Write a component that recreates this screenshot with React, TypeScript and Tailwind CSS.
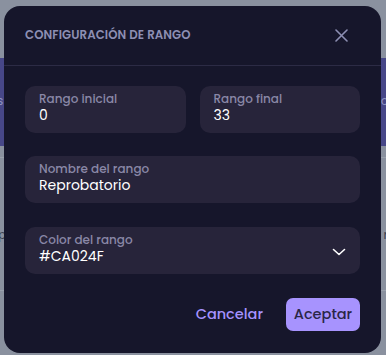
import React from "react";

export default function App() {
  return (
    <div className="relative w-[386px] h-[355px] overflow-hidden bg-[#8a919f]" style={{ fontFamily: "Poppins, Inter, 'Noto Sans', sans-serif" }}>
      {/* backdrop content */}
      <div className="absolute left-0 right-0 top-[58px] h-[88px] bg-[#474788]" />
      <div className="absolute left-0 right-0 top-[157px] h-px bg-[#9aa1ad]" />
      <div className="absolute left-0 right-0 top-[290px] h-px bg-[#9aa1ad]" />
      <span className="absolute left-[-3px] top-[92px] text-[12px] text-[#8f93c0]">s</span>
      <span className="absolute right-[-2px] top-[92px] text-[12px] text-[#8f93c0]">c</span>
      <span className="absolute left-[-2px] top-[226px] text-[12px] text-[#3b4150]">p</span>
      <span className="absolute right-[-2px] top-[226px] text-[12px] text-[#3b4150]">r</span>

      {/* modal */}
      <div className="absolute left-[4px] top-[6px] w-[377px] h-[347px] rounded-[16px] bg-[#16162b] flex flex-col">
        <div className="flex items-center justify-between h-[59px] pl-[21px] pr-[33px]">
          <span className="text-[11.8px] font-semibold tracking-[0.1px] text-[#8d8fb3]">CONFIGURACIÓN DE RANGO</span>
          <svg width="13" height="13" viewBox="0 0 13 13" className="text-[#8d8fb3]">
            <path d="M1 1L12 12M12 1L1 12" stroke="currentColor" strokeWidth="1.6" strokeLinecap="round" />
          </svg>
        </div>
        <div className="h-px bg-[#2c2b45]" />
        <div className="flex flex-col px-[21px] pt-[20px]">
          <div className="flex gap-[14px]">
            <Field label="Rango inicial" value="0" className="w-[161px]" />
            <Field label="Rango final" value="33" className="w-[161px]" />
          </div>
          <Field label="Nombre del rango" value="Reprobatorio" className="mt-[23px]" />
          <div className="mt-[24px] relative">
            <Field label="Color del rango" value="#CA024F" />
            <svg width="14" height="8" viewBox="0 0 14 8" className="absolute right-[14px] top-[21px] text-white">
              <path d="M1.5 1.5L7 6.5L12.5 1.5" stroke="currentColor" strokeWidth="1.6" fill="none" strokeLinecap="round" strokeLinejoin="round" />
            </svg>
          </div>
          <div className="flex justify-end items-center mt-[24px] gap-[23px]">
            <span className="text-[14.5px] font-medium text-[#a592ff]">Cancelar</span>
            <div className="w-[74px] h-[33px] rounded-[7px] bg-[#a793fe] flex items-center justify-center text-[14.5px] font-medium text-[#2a2646]">Aceptar</div>
          </div>
        </div>
      </div>
    </div>
  );
}

function Field({ label, value, className = "" }: { label: string; value: string; className?: string }) {
  return (
    <div className={`h-[47px] rounded-[10px] bg-[#27243a] pl-[14px] pt-[5px] flex flex-col ${className}`}>
      <span className="text-[12px] leading-[15px] font-medium text-[#8a88a7]">{label}</span>
      <span className="text-[14px] leading-[18px] text-white">{value}</span>
    </div>
  );
}
